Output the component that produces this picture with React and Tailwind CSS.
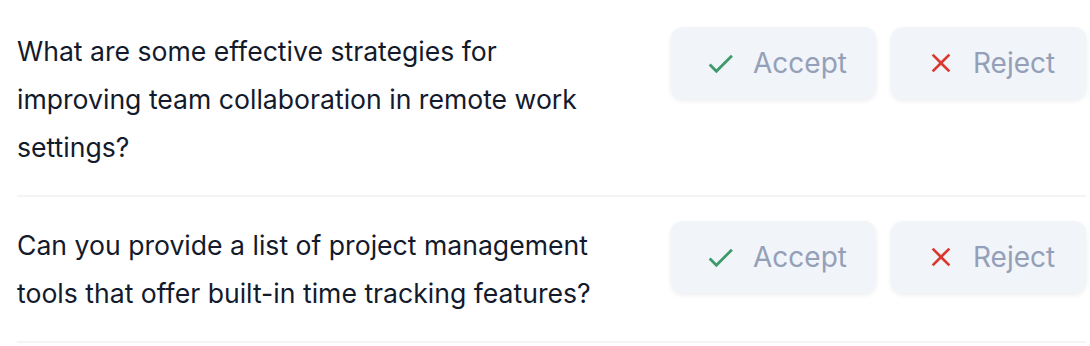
import React from "react";
import { MdCheck, MdClose } from "react-icons/md";

const questions = [
  "What are some effective strategies for improving team collaboration in remote work settings?",
  "Can you provide a list of project management tools that offer built-in time tracking features?",
];

const App = () => {
  return (
    <div className="min-h-screen bg-white pl-[17px] pr-[4px] pt-[3px] font-['Inter',sans-serif]">
      {questions.map((q, i) => (
        <div key={i} className="flex items-start justify-between border-b-2 border-[#f3f4f6] py-6">
          <p className="w-[598px] text-[26.6px] leading-[48px] text-[#131a2c]">{q}</p>

          <div className="flex gap-[15px]">
            <button className="flex h-[72px] w-[205px] items-center gap-4 rounded-xl bg-[#f1f4f9] pl-[33px] text-[28px] text-[#94a0b8] shadow-[0_2px_5px_rgba(15,23,42,0.08)]">
              <MdCheck size={33} className="text-[#3d9a6b]" /> Accept
            </button>
            <button className="flex h-[72px] w-[195px] items-center gap-4 rounded-xl bg-[#f1f4f9] pl-[34px] text-[28px] text-[#94a0b8] shadow-[0_2px_5px_rgba(15,23,42,0.08)]">
              <MdClose size={32} className="text-[#d93a2f]" /> Reject
            </button>
          </div>
        </div>
      ))}
    </div>
  );
};

export default App;
